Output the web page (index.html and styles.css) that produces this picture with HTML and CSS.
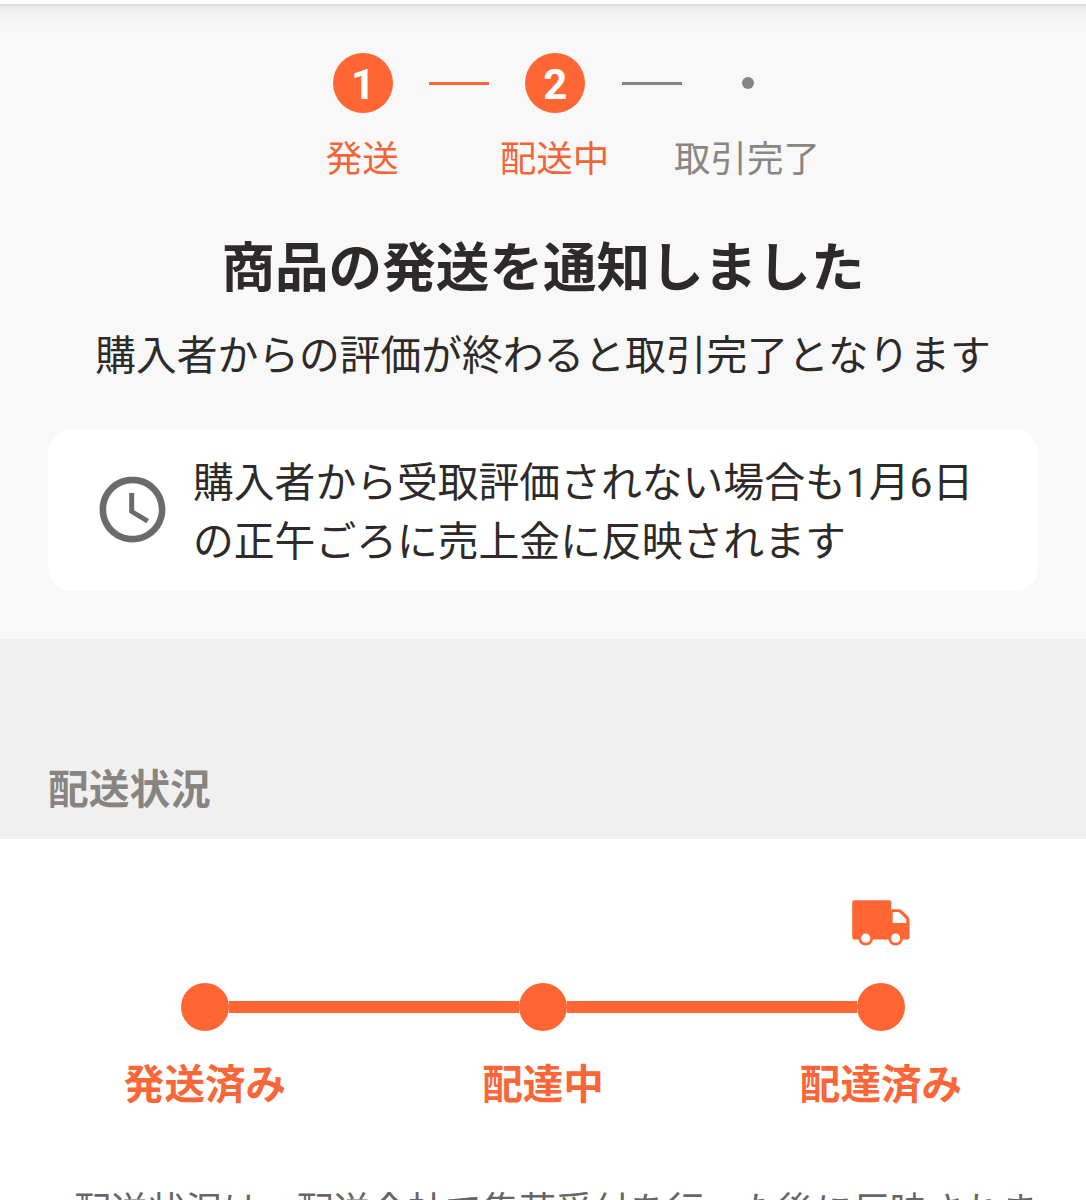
FILE: index.html
```
<!DOCTYPE html>
<html lang="ja">
<head>
    <meta charset="UTF-8">
    <meta name="viewport" content="width=device-width, initial-scale=1.0">
    <title>取引画面</title>
    <link rel="stylesheet" href="styles.css">
</head>
<body>
    <div class="top-bar"></div>
    <section class="summary">
        <div class="markers">
            <div class="marker active">1</div>
            <div class="line active"></div>
            <div class="marker active">2</div>
            <div class="line"></div>
            <div class="marker"><span class="small-dot"></span></div>
        </div>
        <div class="labels">
            <span class="active">発送</span>
            <span class="active">配送中</span>
            <span>取引完了</span>
        </div>
        <h1>商品の発送を通知しました</h1>
        <p class="lead">購入者からの評価が終わると取引完了となります</p>
        <div class="notice">
            <svg class="clock" viewBox="0 0 24 24" fill="#6b6b69">
                <path d="M12 2C6.48 2 2 6.48 2 12s4.47 10 9.99 10C17.52 22 22 17.52 22 12S17.52 2 11.99 2zM12 20c-4.42 0-8-3.58-8-8s3.58-8 8-8 8 3.58 8 8-3.58 8-8 8z"/>
                <path d="M12.5 7H11v6l5.25 3.15.75-1.23-4.5-2.67z"/>
            </svg>
            <p>購入者から受取評価されない場合も1月6日<br>の正午ごろに売上金に反映されます</p>
        </div>
    </section>

    <h2>配送状況</h2>

    <section class="delivery">
        <div class="truck-row">
            <svg class="truck" viewBox="0 0 58 46">
                <path fill="#ff6633" fill-rule="evenodd" d="M2 0.3H37.3Q39.2 0.3 39.2 2.3V9.3H46.5Q48.5 9.3 50 10.6L55.8 16.3Q57.5 18 57.5 20V37.5Q57.5 39.4 55.5 39.4H2.2Q0.2 39.4 0.2 37.4V2.3Q0.2 0.3 2 0.3ZM40.7 12V23H54.2V19.2L47.7 12.7Q47 12 46 12Z"/>
                <circle cx="13.7" cy="38.2" r="6" fill="#fff" stroke="#ff6633" stroke-width="2.7"/>
                <circle cx="43.6" cy="38.2" r="6" fill="#fff" stroke="#ff6633" stroke-width="2.7"/>
            </svg>
        </div>
        <div class="track">
            <span class="dot"></span>
            <span class="bar"></span>
            <span class="dot"></span>
            <span class="bar"></span>
            <span class="dot"></span>
        </div>
        <div class="statuses">
            <span>発送済み</span>
            <span>配達中</span>
            <span>配達済み</span>
        </div>
        <p class="note">配送状況は、配送会社で集荷受付を行った後に反映されま</p>
    </section>
</body>
</html>
```
FILE: styles.css
```
* {
    margin: 0;
    padding: 0;
    box-sizing: border-box;
}

body {
    height: 1200px;
    overflow: hidden;
    background: #fff;
    color: #2e2a29;
    font-family: Roboto, "Noto Sans CJK JP", sans-serif;
}

.top-bar {
    height: 4px;
    background: #fff;
}

.summary {
    height: 635px;
    padding: 49px 48px 0;
    background: linear-gradient(#d9d9d9 0, #e9e9e9 3px, #f1f1f1 9px, #f6f6f6 18px, #f8f8f8 28px);
}

.markers {
    display: flex;
    align-items: center;
    gap: 36.2px;
    margin-left: 285px;
}

.marker {
    display: flex;
    justify-content: center;
    align-items: center;
    width: 60px;
    height: 60px;
    padding-top: 3px;
    border-radius: 50%;
    color: #fff;
    font-size: 42px;
    font-weight: 700;
}

.marker.active,
.line.active {
    background: #ff6633;
}

.small-dot {
    width: 12px;
    height: 12px;
    margin-top: -3px;
    border-radius: 50%;
    background: #848484;
}

.line {
    width: 60px;
    height: 3px;
    background: #848484;
}

.labels {
    display: flex;
    margin: 23px 0 0 218px;
    color: #888683;
    font-size: 36.5px;
    line-height: 48px;
}

.labels span {
    width: 192.4px;
    text-align: center;
}

.labels .active {
    color: #f26539;
}

h1 {
    margin-top: 53px;
    font-size: 53.6px;
    line-height: 64px;
    text-align: center;
    white-space: nowrap;
}

.lead {
    margin: 27px -20px 0;
    font-size: 40.75px;
    line-height: 56px;
    text-align: center;
    white-space: nowrap;
}

.notice {
    display: flex;
    align-items: center;
    gap: 21px;
    height: 162px;
    margin-top: 44.5px;
    padding: 7px 0 0 45px;
    border-radius: 24px;
    background: #fff;
    font-size: 40.8px;
    line-height: 59px;
    white-space: nowrap;
}

.clock {
    flex: none;
    width: 79px;
    height: 79px;
    margin-top: -8px;
}

h2 {
    height: 200px;
    padding: 121px 48px 0;
    background: #f0f0f0;
    color: #888481;
    font-size: 40.7px;
    line-height: 60px;
}

.delivery {
    padding-top: 61px;
}

.truck-row {
    display: flex;
    padding-left: 852px;
}

.truck {
    width: 58px;
    height: 46px;
}

.track {
    display: flex;
    align-items: center;
    margin: 37px 181px 0;
}

.dot {
    width: 48px;
    height: 48px;
    border-radius: 50%;
    background: #ff6633;
}

.bar {
    flex: 1;
    height: 12px;
    background: #ff6633;
}

.statuses {
    display: flex;
    margin: 24px 36px 0;
    color: #fa6637;
    font-size: 40.6px;
    font-weight: 700;
    line-height: 60px;
}

.statuses span {
    flex: 1;
    text-align: center;
}

.note {
    margin: 71px 0 0 74px;
    color: #666;
    font-size: 37.1px;
    line-height: 52px;
    white-space: nowrap;
}
```
